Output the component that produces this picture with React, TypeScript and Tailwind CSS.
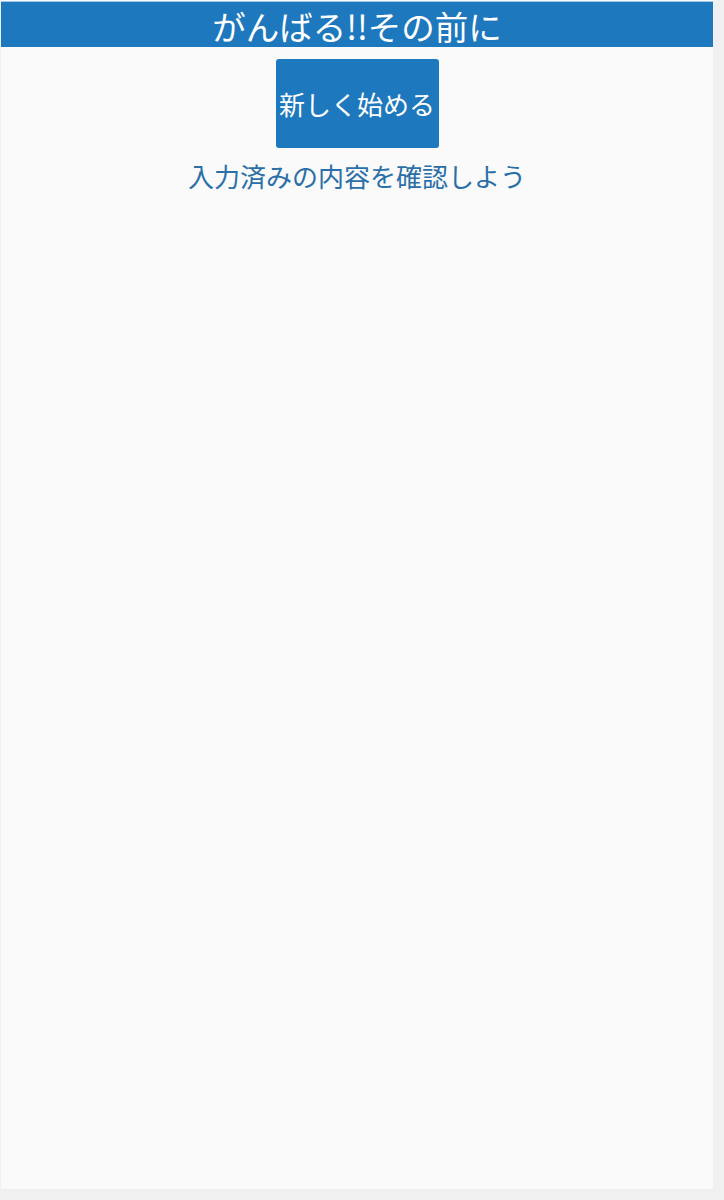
export default function App() {
  return (
    <div
      className="min-h-[1200px] w-full bg-[#f0f0f0]"
      style={{ fontFamily: '"Noto Sans CJK JP", "Noto Sans", sans-serif' }}
    >
      <div className="ml-[1px] h-[1189px] w-[712px] bg-[#fafafa] pt-[1px]">
        <header className="flex h-[46px] items-center justify-center border-t border-[#9cc8ea] bg-[#1e78bd]">
          <h1 className="pt-[2px] text-[33.5px] leading-none text-white">がんばる!!その前に</h1>
        </header>
        <main className="flex flex-col items-center">
          <button
            type="button"
            className="mt-[12px] flex h-[89px] w-[163px] items-center justify-center rounded-[3px] bg-[#1e78bd] text-[26px] text-white"
          >
            新しく始める
          </button>
          <p className="mt-[8px] text-[26px] leading-[39px] text-[#2a6fa8]">入力済みの内容を確認しよう</p>
        </main>
      </div>
    </div>
  );
}
